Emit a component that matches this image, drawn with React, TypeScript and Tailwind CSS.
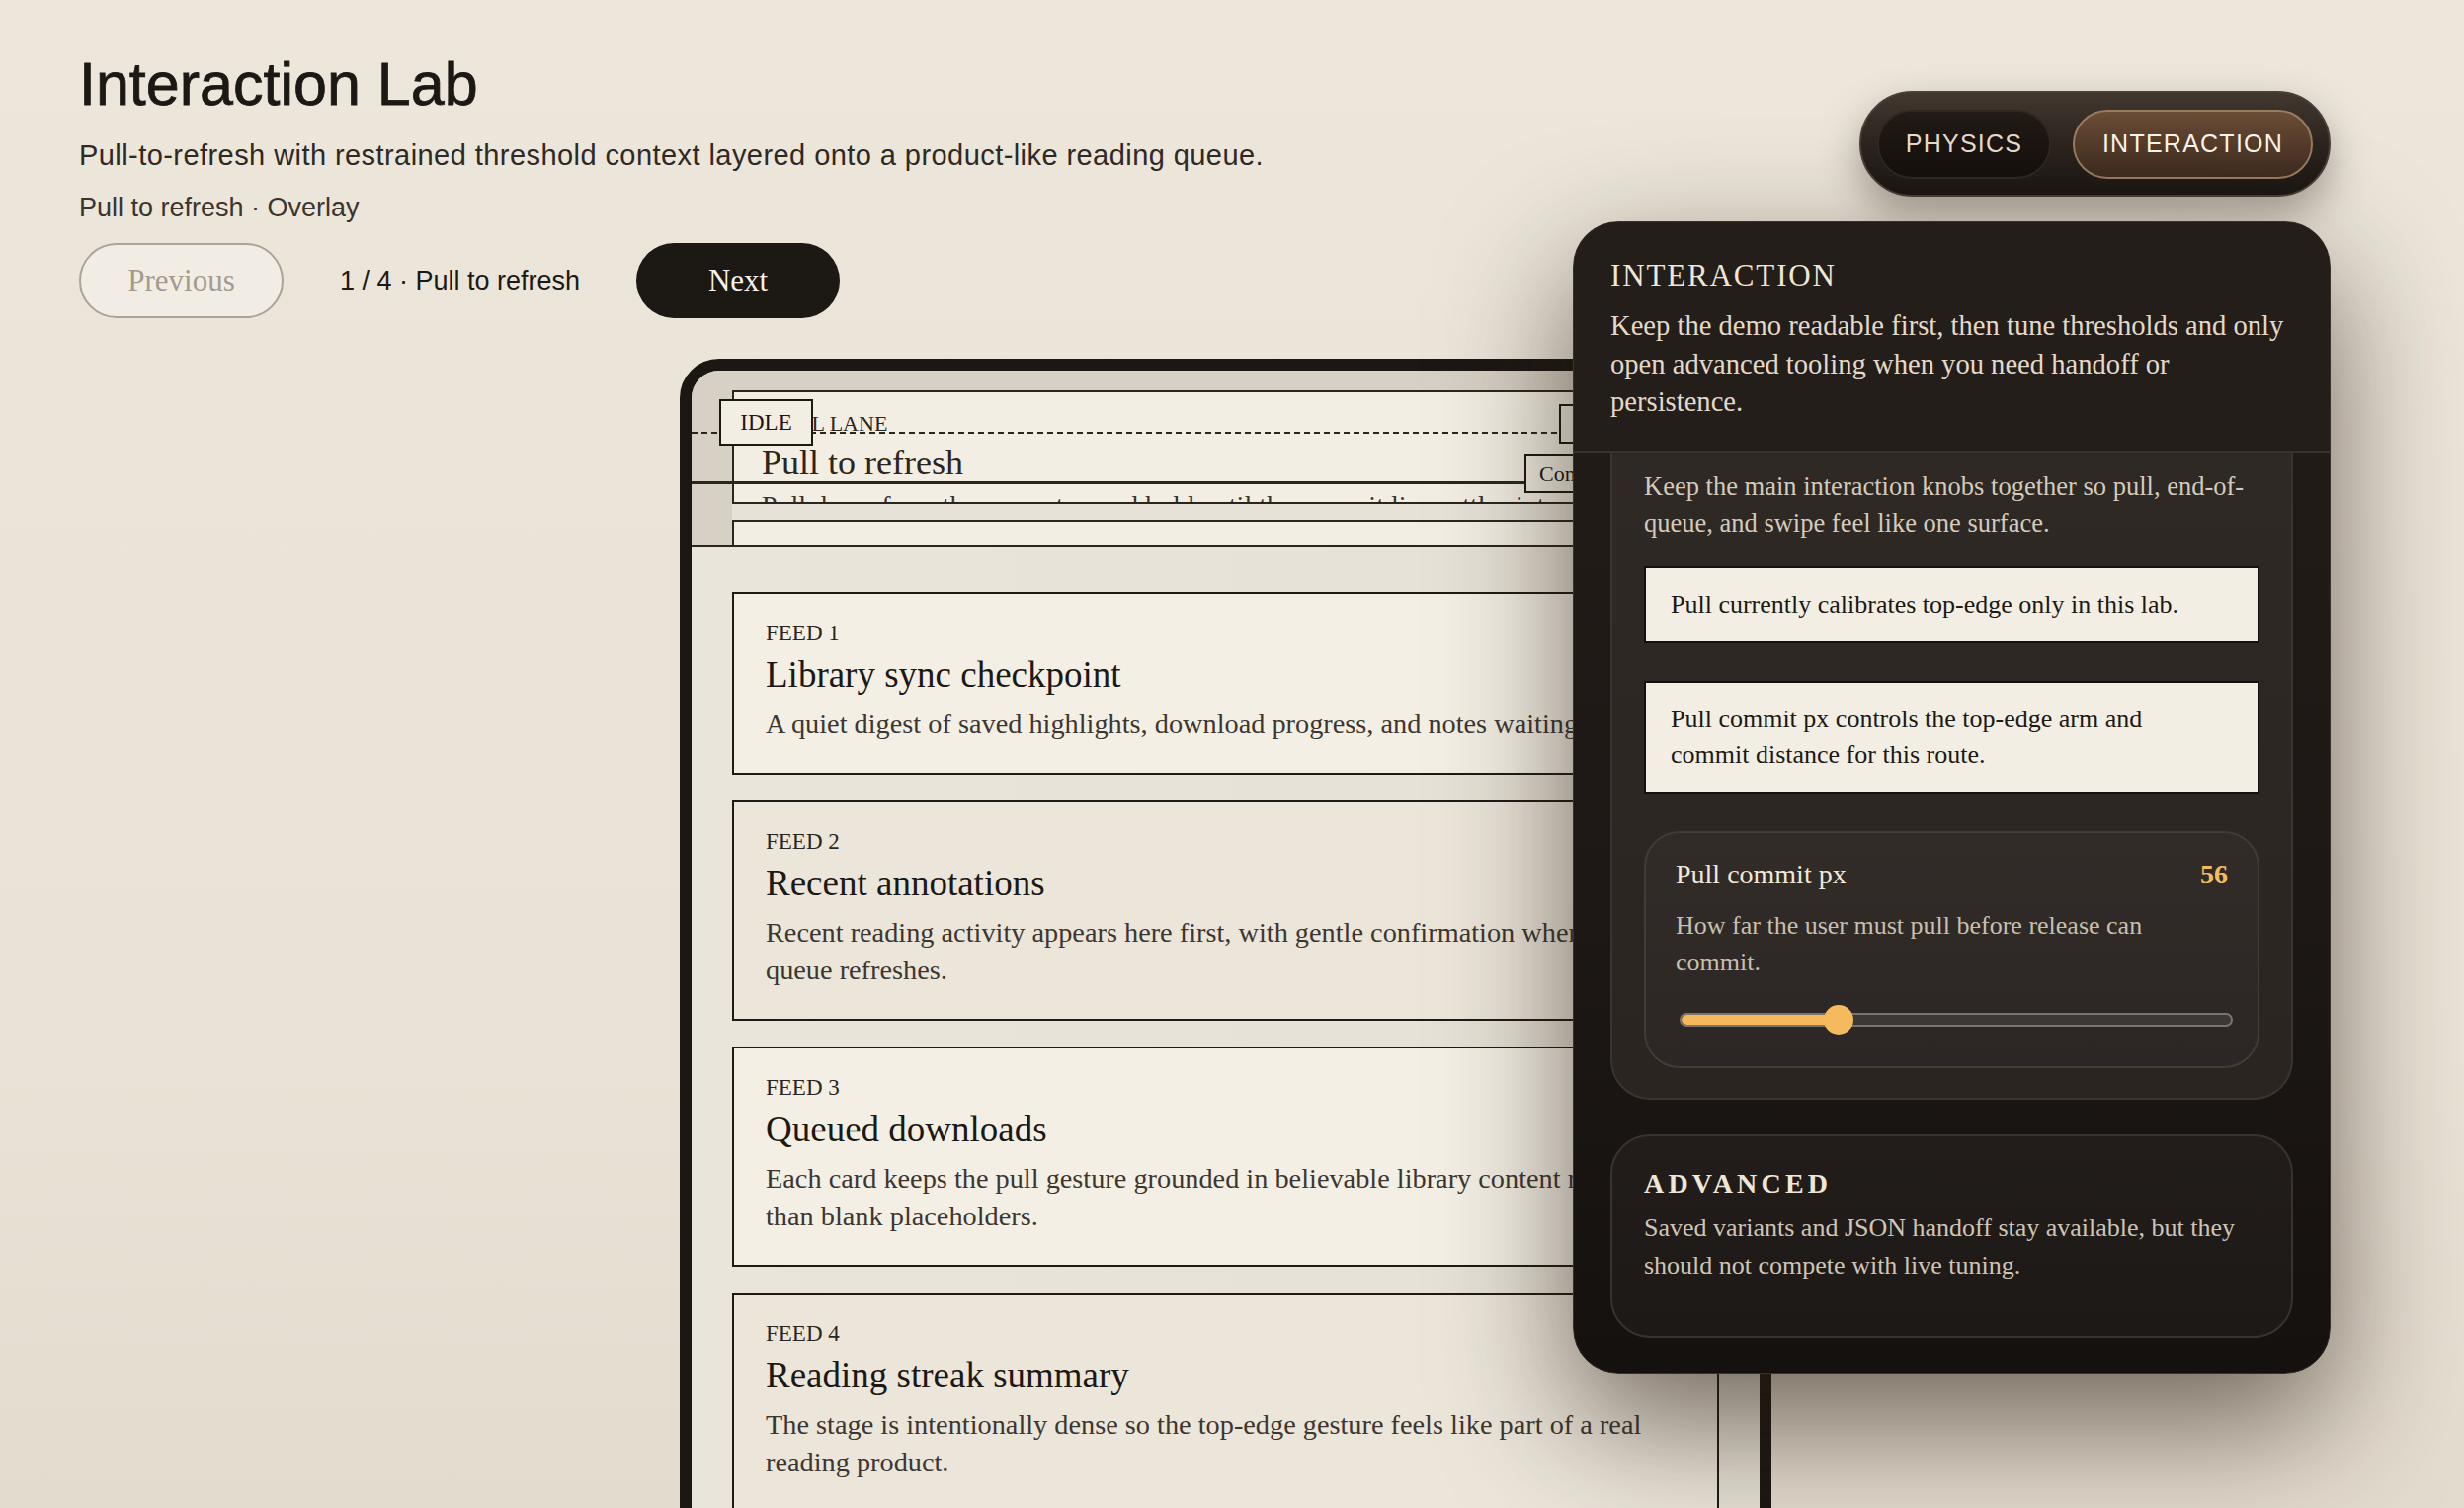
import React from "react";

const SERIF = "font-['Liberation_Serif','Times_New_Roman',serif]";
const SANS = "font-['Liberation_Sans',Arial,sans-serif]";

const feeds = [
  {
    label: "FEED 1",
    title: "Library sync checkpoint",
    body: "A quiet digest of saved highlights, download progress, and notes waiting.",
    bg: "bg-[#f3efe5]",
  },
  {
    label: "FEED 2",
    title: "Recent annotations",
    body: "Recent reading activity appears here first, with gentle confirmation when the queue refreshes.",
    bg: "bg-[#ebe5da]",
  },
  {
    label: "FEED 3",
    title: "Queued downloads",
    body: "Each card keeps the pull gesture grounded in believable library content rather than blank placeholders.",
    bg: "bg-[#f3efe5]",
  },
  {
    label: "FEED 4",
    title: "Reading streak summary",
    body: "The stage is intentionally dense so the top-edge gesture feels like part of a real reading product.",
    bg: "bg-[#ebe5da]",
  },
];

function PullOverlay() {
  return (
    <div className={`relative h-[179px] bg-[#d7d0c4] border-b-2 border-[#2b2520] overflow-hidden ${SERIF}`}>
      {/* overlay card */}
      <div className="absolute left-[41px] top-[20px] right-[41px] bottom-0 border-x-2 border-t-2 border-[#2b2520] bg-[#f2eee3]" />
      {/* dashed arm line */}
      <div className="absolute left-0 top-[62px] w-[878px] h-[2px] bg-[repeating-linear-gradient(90deg,#2b2520_0px,#2b2520_6px,transparent_6px,transparent_10px)]" />
      <div className="absolute left-[80px] top-[43px] text-[22px] leading-[22px] text-[#2b2520] whitespace-nowrap">
        PULL LANE
      </div>
      <div className="absolute left-[28px] top-[29px] w-[95px] h-[47px] border-2 border-[#1c1814] bg-[#f2eee3] flex items-center justify-center text-[23px] leading-none text-[#1c1814]">
        IDLE
      </div>
      <div className="absolute left-[71px] top-[75px] text-[36px] leading-[36px] text-[#2b2520] whitespace-nowrap">
        Pull to refresh
      </div>
      {/* commit line */}
      <div className="absolute left-0 top-[112px] w-[843px] h-[3px] bg-[#2b2520]" />
      <div className="absolute left-[71px] top-[123px] text-[28px] leading-[28px] text-[#3a332d] whitespace-nowrap">
        Pull down from the queue top and hold until the commit line settles into place.
      </div>
      <div className="absolute left-[41px] right-0 top-[133px] h-[20px] border-y-2 border-[#2b2520] bg-[#e6e2d8]" />
      <div className="absolute left-[878px] top-[34px] w-[200px] h-[40px] border-2 border-[#1c1814] bg-[#f2eee3] flex items-center pl-[13px] text-[22px] text-[#1c1814]">
        Arm
      </div>
      <div className="absolute left-[843px] top-[84px] w-[200px] h-[40px] border-2 border-[#1c1814] bg-[#f2eee3] flex items-center pl-[13px] text-[22px] text-[#1c1814]">
        Commit
      </div>
    </div>
  );
}

function FeedCard({ label, title, body, bg }: { label: string; title: string; body: string; bg: string }) {
  return (
    <div className={`border-2 border-[#1f1a16] ${bg} pt-[25px] pb-[30px] px-[32px] ${SERIF}`}>
      <div className="text-[23px] leading-[30px] text-[#2b2520]">{label}</div>
      <div className="mt-[4px] text-[37px] leading-[46px] text-[#1c1814]">{title}</div>
      <p className="mt-[8px] max-w-[905px] text-[28.3px] leading-[38px] text-[#3d3630]">{body}</p>
    </div>
  );
}

function Phone() {
  return (
    <div className="mt-[41px] ml-[608px] w-[1105px] h-[1300px] rounded-[40px] border-[12px] border-[#1b1713] bg-[linear-gradient(90deg,#e9e5db_0%,#e5e0d5_100%)] overflow-hidden">
      <PullOverlay />
      <div className="flex flex-col gap-[26px] px-[41px] pt-[45px]">
        {feeds.map((f) => (
          <FeedCard key={f.label} {...f} />
        ))}
      </div>
    </div>
  );
}

function ModeToggle() {
  return (
    <div className={`w-[477px] h-[107px] rounded-full border-2 border-[#4a3f37] bg-[linear-gradient(180deg,#41372f_0%,#2a231e_55%,#1b1613_100%)] shadow-[0_18px_40px_rgba(40,28,18,0.35)] flex items-center px-[16px] gap-[22px] ${SANS}`}>
      <div className="w-[176px] h-[70px] rounded-full border-2 border-[#30271f] bg-[linear-gradient(180deg,#221b16_0%,#15100d_100%)] flex items-center justify-center text-[25px] tracking-[0.05em] text-[#e6dccc]">
        PHYSICS
      </div>
      <div className="w-[243px] h-[70px] rounded-full border-2 border-[#9a7b5f] bg-[linear-gradient(180deg,#6b4d37_0%,#3e2b1f_100%)] flex items-center justify-center text-[25px] tracking-[0.05em] text-[#fbf5ea]">
        INTERACTION
      </div>
    </div>
  );
}

function Panel() {
  return (
    <div className={`w-[767px] h-[1166px] rounded-[46px] border border-[#3a312b] bg-[linear-gradient(180deg,#231d19_0%,#1d1815_60%,#15110f_100%)] overflow-hidden shadow-[0_50px_130px_rgba(40,28,18,0.62)] ${SERIF}`}>
      <div className="px-[37px] pt-[35px] pb-[29px] border-b-2 border-[#3a332d] bg-[#241e1a]">
        <div className="text-[31px] leading-[38px] tracking-[0.06em] text-[#efe6d8]">INTERACTION</div>
        <p className="mt-[13px] max-w-[686px] text-[28.6px] leading-[38.5px] text-[#e3d9ca]">
          Keep the demo readable first, then tune thresholds and only open advanced tooling when you need handoff or persistence.
        </p>
      </div>
      <div className="px-[37px]">
        <div className="border-x-2 border-b-2 border-[#3b342e] rounded-b-[40px] bg-[linear-gradient(180deg,#2e2925_0%,#2a2521_100%)] px-[32px] pt-[16px] pb-[30px]">
          <p className="max-w-[623px] text-[26.5px] leading-[37px] text-[#d4cabd]">
            Keep the main interaction knobs together so pull, end-of-queue, and swipe feel like one surface.
          </p>
          <div className="mt-[25px] border-2 border-[#14100d] bg-[#f2eee3] px-[25px] py-[19px]">
            <p className="max-w-[530px] text-[26px] leading-[36px] text-[#1c1814]">
              Pull currently calibrates top-edge only in this lab.
            </p>
          </div>
          <div className="mt-[38px] border-2 border-[#14100d] bg-[#f2eee3] px-[25px] py-[19px]">
            <p className="max-w-[530px] text-[26px] leading-[36px] text-[#1c1814]">
              Pull commit px controls the top-edge arm and commit distance for this route.
            </p>
          </div>
          <div className="mt-[38px] rounded-[36px] border-2 border-[#433b34] bg-[linear-gradient(180deg,#312c28_0%,#2c2724_100%)] px-[30px] pt-[24px] pb-[32px]">
            <div className="flex items-baseline justify-between">
              <span className="text-[28px] leading-[36px] text-[#f1e8da]">Pull commit px</span>
              <span className="text-[28px] leading-[36px] font-bold text-[#f4bb5e]">56</span>
            </div>
            <p className="mt-[15px] max-w-[540px] text-[26px] leading-[37px] text-[#c9bfb1]">
              How far the user must pull before release can commit.
            </p>
            <div className="relative mt-[25px] ml-[4px] -mr-[5px] h-[30px]">
              <div className="absolute left-0 right-0 top-[8px] h-[14px] rounded-full border-2 border-[#7b746c] bg-[#3b3835] overflow-hidden">
                <div className="h-full w-[159px] rounded-full bg-[#f3b95c]" />
              </div>
              <div className="absolute top-0 left-[146px] w-[30px] h-[30px] rounded-full bg-[#f4ba5d]" />
            </div>
          </div>
        </div>
      </div>
      <div className="mt-[35px] mx-[37px] rounded-[40px] border-2 border-[#3a332d] bg-[linear-gradient(180deg,#221d1a_0%,#1d1917_100%)] px-[32px] pt-[31px] pb-[52px]">
        <div className="text-[28px] leading-[34px] font-bold tracking-[0.15em] text-[#efe6d8]">ADVANCED</div>
        <p className="mt-[9px] max-w-[620px] text-[26px] leading-[38px] text-[#cfc5b7]">
          Saved variants and JSON handoff stay available, but they should not compete with live tuning.
        </p>
      </div>
    </div>
  );
}

export default function App() {
  return (
    <div className={`relative w-[2494px] h-[1526px] overflow-hidden bg-[linear-gradient(180deg,#ece6db_0%,#e9e2d6_70%,#e3dbce_100%)] ${SANS}`}>
      <div className="pl-[80px] pt-[49px]">
        <h1 className="text-[61px] leading-[73px] text-[#1c1814] [-webkit-text-stroke:0.8px_#1c1814]">Interaction Lab</h1>
        <p className="mt-[15px] text-[29px] leading-[40px] tracking-[0.015em] text-[#2f2924]">
          Pull-to-refresh with restrained threshold context layered onto a product-like reading queue.
        </p>
        <p className="mt-[15px] text-[27px] leading-[36px] text-[#3b342e]">Pull to refresh · Overlay</p>
        <div className="mt-[18px] flex items-center gap-[57px]">
          <button className={`w-[207px] h-[76px] rounded-full border-2 border-[#aaa397] bg-[#f2ede4] text-[31px] text-[#a29b8f] ${SERIF}`}>
            Previous
          </button>
          <span className="text-[27px] text-[#1c1814]">1 / 4 · Pull to refresh</span>
          <button className={`w-[206px] h-[76px] rounded-full bg-[#1c1814] text-[31px] text-[#f7f2ea] ${SERIF}`}>
            Next
          </button>
        </div>
        <Phone />
      </div>
      {/* floating control column overlaying the stage */}
      <div className="absolute right-[135px] top-[92px] flex flex-col items-end gap-[25px]">
        <ModeToggle />
        <Panel />
      </div>
    </div>
  );
}
